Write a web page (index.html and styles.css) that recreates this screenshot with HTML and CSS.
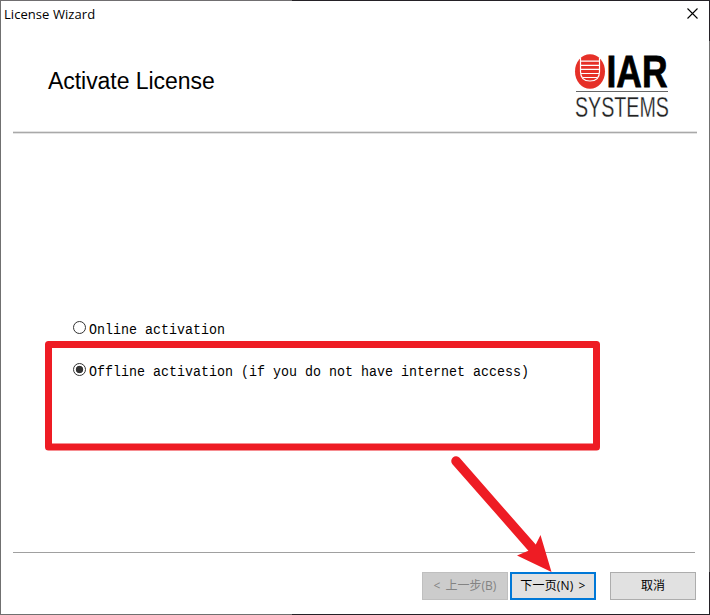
FILE: index.html
```
<!DOCTYPE html>
<html lang="zh-CN">
<head>
<meta charset="utf-8">
<title>License Wizard</title>
<link rel="stylesheet" href="styles.css">
</head>
<body>
<main class="window">
  <header class="titlebar">
    <span class="caption">License Wizard</span>
    <svg class="close" width="11" height="11" viewBox="0 0 11 11" aria-label="Close"><path d="M.5 .5l10 10M10.5 .5l-10 10" stroke="#000" stroke-width="1.1"/></svg>
  </header>
  <section class="banner">
    <h1>Activate License</h1>
    <svg class="logo" width="98" height="76" viewBox="0 0 98 76">
      <ellipse cx="18" cy="20.5" rx="15" ry="17.3" fill="#e63028"/>
      <path d="M8.5 7v13.5q0 9.5 9.500 9.500t9.500-9.500V7" fill="none" stroke="#fff" stroke-width="1.200"/>
      <path d="M8.500 10.200h19M8.500 14.300h19M8.500 18.400h19M9 22.500h18M11 26.500h14" stroke="#fff" stroke-width="1.200"/>
      <text class="logo-bold" x="34.500" y="36" textLength="61" lengthAdjust="spacingAndGlyphs">IAR</text>
      <path d="M4 40.500h92" stroke="#666" stroke-width="1"/>
      <text class="logo-light" x="3" y="66" textLength="94" lengthAdjust="spacingAndGlyphs">SYSTEMS</text>
    </svg>
  </section>
  <section class="content">
    <div class="option"><span class="radio"></span><span class="label">Online activation</span></div>
    <div class="option"><span class="radio checked"></span><span class="label">Offline activation (if you do not have internet access)</span></div>
  </section>
  <footer class="actions">
    <button class="btn back" disabled>&lt; 上一步(B)</button>
    <button class="btn next">下一页(N) &gt;</button>
    <button class="btn cancel">取消</button>
  </footer>
  <svg class="annotation" width="710" height="615" viewBox="0 0 710 615">
    <rect x="48.500" y="344.500" width="548" height="102.500" fill="none" stroke="#ee1c24" stroke-width="7" stroke-linejoin="round"/>
    <path d="M456 461L535 551" stroke="#ee1c24" stroke-width="9.500" stroke-linecap="round"/>
    <path d="M551.500 572L517 555.500L529 550.500L535.500 545L540.500 535Z" fill="#ee1c24"/>
  </svg>
</main>
</body>
</html>
```
FILE: styles.css
```
* { box-sizing: border-box; }
body { margin: 0; background: #fff; color: #000; }
.window {
  position: relative;
  width: 710px;
  height: 615px;
  display: flex;
  flex-direction: column;
  border: 1px solid #707070;
  border-top-color: #242126;
  background: #fff;
}
.window::after {
  content: "";
  position: absolute;
  inset: -1px;
  pointer-events: none;
  background:
    linear-gradient(#706e70, #706e70) 0 0 / 12px 1px no-repeat,
    linear-gradient(#706e70, #706e70) 0 0 / 292px 1px no-repeat,
    linear-gradient(#242126, #242126) 100% 0 / 1px 41px no-repeat,
    linear-gradient(#242126, #242126) 100% 100% / 1px 43px no-repeat,
    linear-gradient(#242126, #242126) 100% 100% / 418px 1px no-repeat;
}
.titlebar {
  height: 28px;
  display: flex;
  align-items: flex-start;
  justify-content: space-between;
  padding: 4px 11px 0 3px;
}
.caption {
  font: 13px/19px "Open Sans", "Noto Sans", sans-serif;
  letter-spacing: 0.06px;
}
.close { margin-top: 3px; }
.banner {
  height: 104px;
  margin: 0 12px;
  padding: 22px 27px 0 35px;
  display: flex;
  justify-content: space-between;
  border-bottom: 1px solid #a9a9a9;
  box-shadow: 0 1px #e3e3e3, inset 0 -1px #e3e3e3;
}
h1 {
  margin: 15px 0 0;
  font: 23px/30px "Liberation Sans", Arial, sans-serif;
  letter-spacing: -0.05px;
}
.logo { overflow: visible; }
.logo-bold { font: 700 45px/1 "Liberation Sans", Arial, sans-serif; stroke: #000; stroke-width: .8px; }
.logo-light { font: 30px/1 "Liberation Sans", Arial, sans-serif; fill: #222; stroke: #fff; stroke-width: .3px; }
.content {
  height: 420px;
  padding: 188px 0 0 60px;
  margin: 0 14px 0 12px;
  border-bottom: 1px solid #a0a0a0;
}
.option { display: flex; height: 42px; }
.radio {
  width: 13px;
  height: 13px;
  margin-right: 3px;
  border: 1px solid #333;
  border-radius: 50%;
  background: #fff;
}
.checked { background: radial-gradient(circle, #333 3.4px, transparent 4.1px); }
.label {
  height: 16px;
  margin-top: 2px;
  font: 13.333px/16px "Liberation Mono", "Courier New", monospace;
  transform: scaleY(1.15);
  white-space: pre;
}
.actions {
  display: flex;
  padding: 19px 13px 0 0;
  justify-content: flex-end;
}
.btn {
  width: 86px;
  height: 28px;
  padding: 0;
  border: 1px solid #adadad;
  background: #e1e1e1;
  color: #000;
  font: 12px/20px "Open Sans", "Noto Sans CJK SC", sans-serif;
  word-spacing: 2px;
}
.back { border-color: #bfbfbf; background: #ccc; color: #838383; margin-right: 2px; }
.next { border: 2px solid #0078d7; margin-right: 14px; letter-spacing: .15px; }
.annotation { position: absolute; left: -1px; top: -1px; pointer-events: none; }
```
